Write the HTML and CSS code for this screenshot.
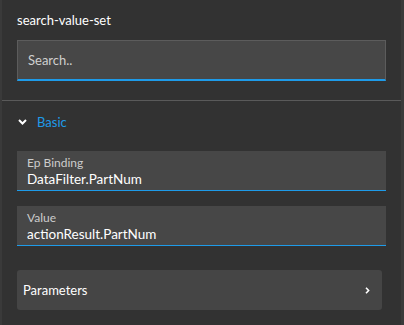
FILE: index.html
```html
<!DOCTYPE html>
<html>

<head>
  <title>search-value-set</title>
  <link rel="stylesheet" href="styles.css">
</head>

<body>
  <div class="panel">
    <div class="panel-top">
      <div class="panel-title">search-value-set</div>
      <div class="search-box">Search..</div>
    </div>
    <hr class="separator">
    <div class="section">
      <div class="section-head">
        <svg class="chevron-down" width="9" height="6" viewBox="0 0 9 6">
          <path d="M1 1 L4.5 4.5 L8 1" fill="none" stroke="#ffffff" stroke-width="2"></path>
        </svg>
        <span class="section-name">Basic</span>
      </div>
      <div class="field">
        <div class="field-label">Ep Binding</div>
        <div class="field-value">DataFilter.PartNum</div>
      </div>
      <div class="field">
        <div class="field-label">Value</div>
        <div class="field-value">actionResult.PartNum</div>
      </div>
      <div class="nav-row">
        <span>Parameters</span>
        <svg class="chevron-right" width="5" height="7" viewBox="0 0 5 7">
          <path d="M1 0.8 L3.6 3.5 L1 6.2" fill="none" stroke="#ffffff" stroke-width="1.6"></path>
        </svg>
      </div>
    </div>
  </div>
</body>

</html>
```

FILE: styles.css
```css
html,
body {
  margin: 0;
  height: 100%;
}

body {
  background-color: #3a3a3a;
  font-family: Lato, "Noto Sans", sans-serif;
  color: #ffffff;
}

.panel {
  margin-left: 2px;
  margin-right: 3px;
  height: 100%;
  background-color: #323232;
}

.panel-top {
  padding: 10px 15px 19px 15px;
}

.panel-title {
  font-size: 13px;
  height: 20px;
  line-height: 20px;
  margin-bottom: 10px;
}

.search-box {
  box-sizing: border-box;
  height: 41px;
  line-height: 38px;
  padding-left: 10px;
  font-size: 13px;
  color: #cfcfcf;
  background-color: #474747;
  border: 1px solid #5c5c5c;
  border-bottom: 2px solid #1e9be9;
}

.separator {
  margin: 0;
  border: 0;
  height: 1px;
  background-color: #5a5a5a;
}

.section {
  padding: 12px 15px 0 15px;
}

.section-head {
  display: flex;
  align-items: center;
  height: 18px;
  margin-bottom: 20px;
}

.chevron-down {
  margin-left: 1px;
  margin-right: 10px;
}

.section-name {
  font-size: 13px;
  color: #1e9be9;
}

.field {
  box-sizing: border-box;
  width: 369px;
  height: 40px;
  padding: 4px 10px 0 10px;
  margin-bottom: 15px;
  background-color: #474747;
  border-bottom: 1px solid #1e9be9;
}

.field-label {
  font-size: 12px;
  line-height: 15px;
  color: #cccccc;
}

.field-value {
  font-size: 13.5px;
  line-height: 18px;
}

.nav-row {
  display: flex;
  align-items: center;
  justify-content: space-between;
  width: 365px;
  height: 40px;
  box-sizing: border-box;
  margin-top: 24px;
  padding: 0 12px 0 6px;
  font-size: 13px;
  background-color: #454545;
  border-radius: 3px;
}
```
